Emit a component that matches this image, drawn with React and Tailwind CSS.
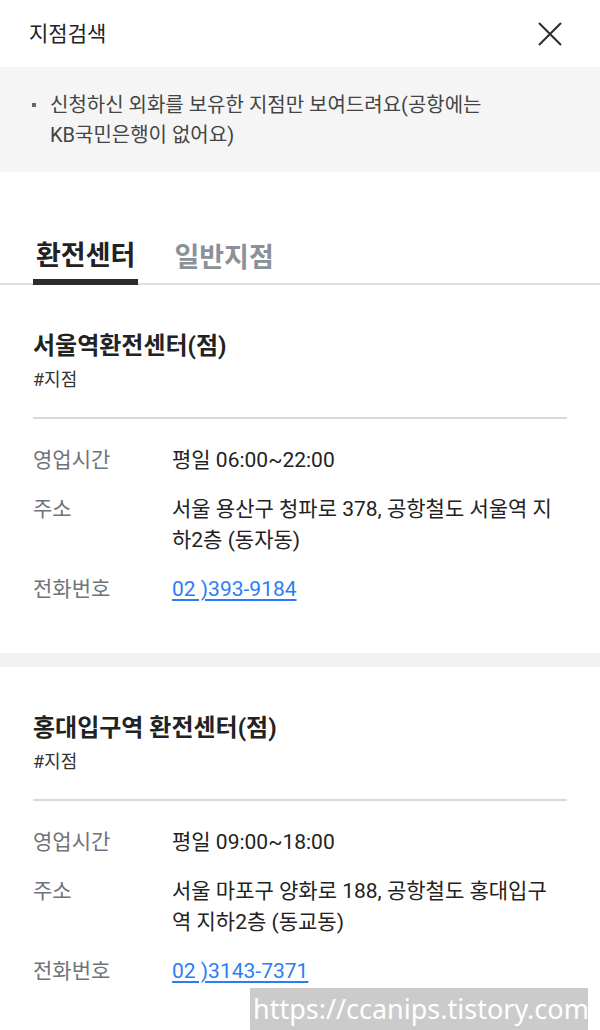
const branches = [
  {
    name: "서울역환전센터(점)",
    hours: "평일 06:00~22:00",
    address: "서울 용산구 청파로 378, 공항철도 서울역 지하2층 (동자동)",
    phone: "02 )393-9184",
  },
  {
    name: "홍대입구역 환전센터(점)",
    hours: "평일 09:00~18:00",
    address: "서울 마포구 양화로 188, 공항철도 홍대입구역 지하2층 (동교동)",
    phone: "02 )3143-7371",
  },
];

const font = { fontFamily: 'Roboto, "Noto Sans CJK KR", sans-serif' };

const BranchCard = ({ branch }) => {
  return (
    <div className="px-[33px] pt-[45px] pb-[48px]">
      <h3 className="text-[24px] leading-[33px] font-bold text-[#222]">
        {branch.name}
      </h3>
      <p className="mt-[4px] text-[18px] leading-[26px] text-[#333]">#지점</p>
      <div className="mt-[24px] h-[2px] bg-[#d6d9dd]" />

      <div className="pt-[26px] flex flex-col gap-[18px] text-[21px] leading-[31px]">
        <div className="flex">
          <span className="w-[139px] shrink-0 text-[#6f737a]">영업시간</span>
          <span className="text-[#222]">{branch.hours}</span>
        </div>
        <div className="flex">
          <span className="w-[139px] shrink-0 text-[#6f737a]">주소</span>
          <span className="w-[390px] text-[#222] break-all">{branch.address}</span>
        </div>
        <div className="flex">
          <span className="w-[139px] shrink-0 text-[#6f737a]">전화번호</span>
          <a className="text-[#2a7ef5] underline underline-offset-[3px]">
            {branch.phone}
          </a>
        </div>
      </div>
    </div>
  );
};

const App = () => {
  return (
    <div className="relative w-[600px] h-[1030px] overflow-hidden bg-white" style={font}>
      <header className="h-[67px] flex items-center justify-between pl-[29px] pr-[37px]">
        <h1 className="text-[21px] leading-[28px] text-[#222]">지점검색</h1>
        <button className="w-[26px] h-[26px] flex items-center justify-center">
          <svg width="26" height="26" viewBox="0 0 26 26" fill="none">
            <path d="M2 2L24 24M24 2L2 24" stroke="#2b2b2b" strokeWidth="2" />
          </svg>
        </button>
      </header>

      <section className="bg-[#f5f5f5] h-[105px] pt-[23px] pl-[32px] pr-[30px]">
        <div className="flex text-[20px] leading-[30px] text-[#444]">
          <span className="w-[4px] h-[4px] bg-[#666] mt-[13px] mr-[14px] shrink-0" />
          <p>
            신청하신 외화를 보유한 지점만 보여드려요(공항에는
            <br />
            KB국민은행이 없어요)
          </p>
        </div>
      </section>

      <nav className="mt-[65px] flex gap-[33px] pl-[33px] border-b-[2px] border-[#dde0e4]">
        <button className="-mb-[2px] px-[3px] pb-[4px] border-b-[6px] border-[#2a2c30] text-[27px] leading-[38px] font-bold text-[#222]">
          환전센터
        </button>
        <button className="px-[3px] pb-[4px] text-[27px] leading-[38px] font-bold text-[#8b9199]">
          일반지점
        </button>
      </nav>

      <BranchCard branch={branches[0]} />
      <div className="h-[14px] bg-[#f0f1f3]" />
      <BranchCard branch={branches[1]} />

      <div className="absolute left-[250px] bottom-0 w-[338px] h-[42px] bg-[#cbcbcb] flex items-center pl-[3px]">
        <span
          className="text-[27px] leading-[36px] text-white whitespace-nowrap"
          style={{ fontFamily: '"Noto Sans", sans-serif' }}
        >
          https://ccanips.tistory.com
        </span>
      </div>
    </div>
  );
};

export default App;
